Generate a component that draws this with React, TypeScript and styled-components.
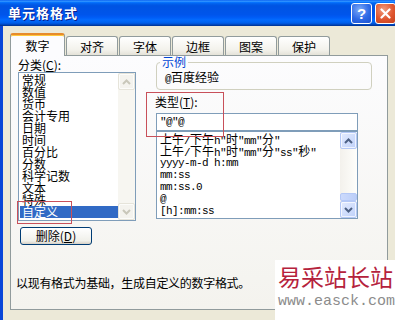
import styled, { createGlobalStyle } from 'styled-components'

const UI = '"Noto Sans CJK SC", "Noto Sans", sans-serif'
const MONO = '"Liberation Mono", "DejaVu Sans Mono", monospace'

const GlobalStyle = createGlobalStyle`
  html, body {
    margin: 0;
    padding: 0;
    background: #ECE9D8;
    overflow: hidden;
  }
  body {
    font-family: ${UI};
    font-size: 12px;
    color: #000;
  }
`

const categories = ['常规', '数值', '货币', '会计专用', '日期', '时间', '百分比', '分数', '科学记数', '文本', '特殊', '自定义']

const formats = [
  '上午/下午h"时"mm"分"',
  '上午/下午h"时"mm"分"ss"秒"',
  'yyyy-m-d h:mm',
  'mm:ss',
  'mm:ss.0',
  '@',
  '[h]:mm:ss',
]

const tabs = ['数字', '对齐', '字体', '边框', '图案', '保护']

const Window = styled.div`
  position: relative;
  width: 395px;
  height: 320px;
  display: flex;
  flex-direction: column;
  background: #ECE9D8;
  overflow: hidden;
`

const TitleBar = styled.div`
  height: 26px;
  flex: none;
  display: flex;
  align-items: center;
  padding-left: 8px;
  background: linear-gradient(to bottom, #0058EE 0%, #3593FF 4%, #288EFF 6%, #127DFF 8%, #036FFC 10%, #0262EE 14%, #0057E5 20%, #0054E3 24%, #0055EB 56%, #005BF5 66%, #026AFE 76%, #0062EF 86%, #0052D6 92%, #0040AB 96%, #003092 100%);
`

const Title = styled.div`
  flex: 1;
  color: #fff;
  font: bold 13px ${UI};
  letter-spacing: 1px;
  line-height: 16px;
  text-shadow: 1px 1px 0 #0A1E8C;
`

const TitleButtons = styled.div`
  display: flex;
  gap: 3px;
  margin-right: -1px;
`

const TitleButton = styled.div<{ $close?: boolean }>`
  width: 21px;
  height: 21px;
  box-sizing: border-box;
  border: 1px solid #fff;
  border-radius: 3px;
  display: flex;
  align-items: center;
  justify-content: center;
  color: #fff;
  font: bold 15px "Liberation Sans", sans-serif;
  background: ${p => p.$close
    ? 'radial-gradient(circle at 40% 30%, #F09B7E, #E0562F 55%, #C4401C)'
    : 'radial-gradient(circle at 40% 30%, #7DAAF8, #2E6AE6 55%, #1A50CF)'};
`

const Body = styled.div`
  flex: 1;
  display: flex;
  flex-direction: column;
  border-left: 3px solid #0846D8;
  padding: 7px 7px 0 7px;
`

const TabStrip = styled.div`
  display: flex;
  align-items: flex-end;
  height: 23px;
  margin-bottom: -1px;
  position: relative;
  z-index: 1;
`

const Tab = styled.div<{ $active?: boolean }>`
  box-sizing: border-box;
  display: flex;
  align-items: center;
  justify-content: center;
  font-size: 12px;
  line-height: 14px;
  border: 1px solid #919B9C;
  border-bottom: none;
  border-radius: 3px 3px 0 0;
  width: ${p => (p.$active ? 55 : 52)}px;
  height: ${p => (p.$active ? 23 : 19)}px;
  margin-bottom: ${p => (p.$active ? 0 : 1)}px;
  margin-left: ${p => (p.$active ? 0 : 1)}px;
  background: ${p => (p.$active ? '#FCFCFE' : 'linear-gradient(#FFFFFF, #F3F2EC 70%, #E4E2D8)')};
  border-top: ${p => (p.$active ? '2px solid #E68B2C' : '1px solid #919B9C')};
  box-shadow: ${p => (p.$active ? 'inset 0 1px 0 #FFC83C' : 'none')};
  padding-top: ${p => (p.$active ? 0 : 1)}px;
`

const Panel = styled.div`
  height: 255px;
  box-sizing: border-box;
  border: 1px solid #919B9C;
  background: linear-gradient(#FCFCFE, #F4F3EE);
  padding: 2px 6px 0 6px;
  display: flex;
  flex-direction: column;
`

const Columns = styled.div`
  display: flex;
  align-items: flex-start;
`

const LeftCol = styled.div`
  width: 118px;
  padding-left: 1px;
  display: flex;
  flex-direction: column;
`

const RightCol = styled.div`
  width: 216px;
  margin-left: 20px;
  display: flex;
  flex-direction: column;
`

const Label = styled.div`
  line-height: 14px;
  height: 14px;
  white-space: nowrap;
  u { text-decoration: underline; }
`

const ListBox = styled.div<{ $h: number; $w: number }>`
  width: ${p => p.$w}px;
  height: ${p => p.$h}px;
  box-sizing: border-box;
  border: 1px solid #7F9DB9;
  background: #fff;
  display: flex;
  overflow: hidden;
`

const Items = styled.div`
  flex: 1;
  padding-top: 1px;
  min-width: 0;
`

const CatItem = styled.div<{ $selected?: boolean }>`
  height: 12px;
  line-height: 12px;
  font-size: 12px;
  padding-left: 2px;
  margin-left: 1px;
  white-space: nowrap;
  background: ${p => (p.$selected ? '#316AC5' : 'transparent')};
  color: ${p => (p.$selected ? '#fff' : '#000')};
`

const FmtItem = styled.div`
  height: 12px;
  line-height: 12px;
  padding-left: 3px;
  white-space: nowrap;
  font-family: ${MONO};
  font-size: 11px;
  letter-spacing: -0.6px;
`

const Wide = styled.span`
  font-family: ${UI};
  font-size: 12px;
  letter-spacing: 0;
`

const ScrollBar = styled.div<{ $disabled?: boolean }>`
  width: 17px;
  flex: none;
  display: flex;
  flex-direction: column;
  background: ${p => (p.$disabled ? '#F7F6F1' : 'linear-gradient(to right, #F3F1EC, #FEFEFB)')};
`

const ScrollTrack = styled.div`
  flex: 1;
  display: flex;
  flex-direction: column;
  justify-content: flex-end;
`

const ScrollButton = styled.div<{ $disabled?: boolean }>`
  height: 17px;
  box-sizing: border-box;
  border-radius: 2px;
  display: flex;
  align-items: center;
  justify-content: center;
  border: 1px solid ${p => (p.$disabled ? '#E6E4DA' : '#B4C8F6')};
  background: ${p => (p.$disabled ? '#F4F3EE' : 'linear-gradient(135deg, #E3EBFE, #BFD1FA)')};
  box-shadow: inset 0 0 0 1px rgba(255, 255, 255, 0.7);
  color: ${p => (p.$disabled ? '#C9C7BA' : '#4D6185')};
`

const Thumb = styled.div`
  height: 8px;
  box-sizing: border-box;
  border-radius: 2px;
  border: 1px solid #B4C8F6;
  background: linear-gradient(to right, #CCDAFC, #BBCEF8);
`

const XPButton = styled.div`
  width: 72px;
  height: 18px;
  margin: 6px 0 0 2px;
  box-sizing: border-box;
  border: 1px solid #003C74;
  border-radius: 3px;
  background: linear-gradient(#FFFFFF, #F0F0EA 80%, #D6D0C5);
  display: flex;
  align-items: center;
  justify-content: center;
  line-height: 14px;
`

const GroupBox = styled.fieldset`
  margin: -2px 0 0 0;
  padding: 2px 8px 5px 8px;
  border: 1px solid #D0D0BF;
  border-radius: 4px;
  min-width: 0;
`

const Legend = styled.legend`
  padding: 0 2px;
  margin-left: -5px;
  color: #0046D5;
  font-size: 12px;
  line-height: 12px;
`

const Sample = styled.div`
  line-height: 14px;
  height: 14px;
  font-family: ${MONO};
  font-size: 11px;
  letter-spacing: -0.6px;
`

const TypeInput = styled.div`
  width: 202px;
  height: 18px;
  margin-top: 4px;
  box-sizing: border-box;
  border: 1px solid #7F9DB9;
  background: #fff;
  padding-left: 3px;
  line-height: 16px;
  font-family: ${MONO};
  font-size: 11px;
  letter-spacing: -0.6px;
`

const Description = styled.div`
  margin: 31px 0 0 -1px;
  line-height: 14px;
  font-size: 12px;
  letter-spacing: -0.3px;
`

const Annotation = styled.div<{ $x: number; $y: number; $w: number; $h: number }>`
  position: absolute;
  left: ${p => p.$x}px;
  top: ${p => p.$y}px;
  width: ${p => p.$w}px;
  height: ${p => p.$h}px;
  box-sizing: border-box;
  border: 1px solid #C8505A;
  pointer-events: none;
`

const Watermark = styled.div`
  position: absolute;
  left: 275px;
  top: 260px;
  width: 120px;
  height: 60px;
  background: #fff;
  padding: 3px 0 0 3px;
  box-sizing: border-box;
  overflow: hidden;
`

const WatermarkTitle = styled.div`
  font-family: ${UI};
  font-size: 23px;
  line-height: 26px;
  color: #B5223C;
  white-space: nowrap;
`

const WatermarkUrl = styled.div`
  margin-top: 5px;
  font-family: ${MONO};
  font-size: 15px;
  line-height: 16px;
  color: #8C8C8C;
  white-space: nowrap;
`

function Chevron({ up }: { up?: boolean }) {
  return (
    <svg width="9" height="6" viewBox="0 0 9 6">
      <polyline
        points={up ? '1,5 4.5,1.5 8,5' : '1,1 4.5,4.5 8,1'}
        fill="none"
        stroke="currentColor"
        strokeWidth="2"
      />
    </svg>
  )
}

function Mixed({ text }: { text: string }) {
  const runs = text.match(/[\u2E80-\u9FFF\uFF00-\uFFEF]+|[^\u2E80-\u9FFF\uFF00-\uFFEF]+/g) || []
  return (
    <>
      {runs.map((r, i) =>
        /[\u2E80-\u9FFF\uFF00-\uFFEF]/.test(r) ? <Wide key={i}>{r}</Wide> : <span key={i}>{r}</span>
      )}
    </>
  )
}

function Scroll({ disabled, thumb }: { disabled?: boolean; thumb?: boolean }) {
  return (
    <ScrollBar $disabled={disabled}>
      <ScrollButton $disabled={disabled}><Chevron up /></ScrollButton>
      <ScrollTrack>{thumb && <Thumb />}</ScrollTrack>
      <ScrollButton $disabled={disabled}><Chevron /></ScrollButton>
    </ScrollBar>
  )
}

export default function App() {
  return (
    <Window>
      <GlobalStyle />
      <TitleBar>
        <Title>单元格格式</Title>
        <TitleButtons>
          <TitleButton>?</TitleButton>
          <TitleButton $close>
            <svg width="11" height="11" viewBox="0 0 11 11">
              <path d="M1.5 1.5 L9.5 9.5 M9.5 1.5 L1.5 9.5" stroke="#fff" strokeWidth="2.2" strokeLinecap="round" />
            </svg>
          </TitleButton>
        </TitleButtons>
      </TitleBar>
      <Body>
        <TabStrip>
          {tabs.map((t, i) => (
            <Tab key={t} $active={i === 0}>{t}</Tab>
          ))}
        </TabStrip>
        <Panel>
          <Columns>
            <LeftCol>
              <Label>分类(<u>C</u>):</Label>
              <ListBox $w={118} $h={149}>
                <Items>
                  {categories.map(c => (
                    <CatItem key={c} $selected={c === '自定义'}>{c}</CatItem>
                  ))}
                </Items>
                <Scroll disabled />
              </ListBox>
              <XPButton>删除(<u>D</u>)</XPButton>
            </LeftCol>
            <RightCol>
              <GroupBox>
                <Legend>示例</Legend>
                <Sample><Mixed text="@百度经验" /></Sample>
              </GroupBox>
              <Label style={{ marginTop: 5, marginLeft: -1 }}>类型(<u>T</u>):</Label>
              <TypeInput>"@"@</TypeInput>
              <ListBox $w={202} $h={88}>
                <Items>
                  {formats.map(f => (
                    <FmtItem key={f}><Mixed text={f} /></FmtItem>
                  ))}
                </Items>
                <Scroll thumb />
              </ListBox>
            </RightCol>
          </Columns>
          <Description>以现有格式为基础，生成自定义的数字格式。</Description>
        </Panel>
      </Body>
      <Annotation $x={146} $y={92} $w={78} $h={45} />
      <Annotation $x={17} $y={201} $w={55} $h={23} />
      <Watermark>
        <WatermarkTitle>易采站长站</WatermarkTitle>
        <WatermarkUrl>www.easck.com</WatermarkUrl>
      </Watermark>
    </Window>
  )
}
